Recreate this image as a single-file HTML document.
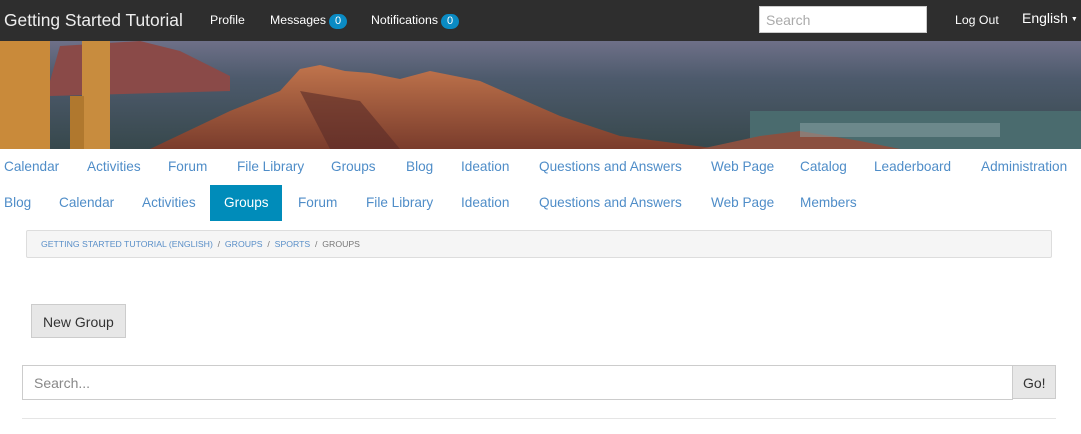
<!DOCTYPE html>
<html><head><meta charset="utf-8"><style>
*{margin:0;padding:0;box-sizing:border-box}
body{width:1081px;height:434px;background:#fff;font-family:"Liberation Sans",sans-serif;position:relative;overflow:hidden}
.top{position:absolute;left:0;top:0;width:1081px;height:41px;background:#2e2e2e;color:#fff}
.a{position:absolute;white-space:nowrap}
.badge{display:inline-block;background:#0a8bc4;color:#fff;border-radius:8px;font-size:11px;padding:1px 6px;margin-left:3px;line-height:13px}
.n{position:absolute;color:#4f8dc8;font-size:13.6px;white-space:nowrap}
</style></head><body>
<div class="top">
<div class="a" style="left:4px;top:10px;font-size:17.4px;color:#eee">Getting Started Tutorial</div>
<div class="a" style="left:210px;top:13px;font-size:12.3px">Profile</div>
<div class="a" style="left:270px;top:13px;font-size:12.3px">Messages<span class="badge">0</span></div>
<div class="a" style="left:371px;top:13px;font-size:12.3px">Notifications<span class="badge">0</span></div>
<div class="a" style="left:759px;top:6px;width:168px;height:27px;background:#fff;border:1px solid #ccc;color:#aaa;font-size:14px;padding:5px 6px">Search</div>
<div class="a" style="left:955px;top:13px;font-size:12.3px">Log Out</div>
<div class="a" style="left:1022px;top:10px;font-size:14px">English<span style="font-size:7px;vertical-align:middle;margin-left:3px">▼</span></div>
</div>
<svg style="position:absolute;left:0;top:41px" width="1081" height="108" viewBox="0 0 1081 108">
<defs>
<linearGradient id="sky" x1="0" y1="0" x2="0" y2="1"><stop offset="0" stop-color="#6e7088"/><stop offset=".35" stop-color="#4d5a6c"/><stop offset="1" stop-color="#37484c"/></linearGradient>
<linearGradient id="m" x1="0" y1="0" x2="0" y2="1"><stop offset="0" stop-color="#c0744c"/><stop offset="1" stop-color="#7a3c2c"/></linearGradient>
</defs>
<rect width="1081" height="108" fill="url(#sky)"/>
<rect y="70" x="750" width="331" height="38" fill="#4a6b6e"/>
<path d="M50 40 L60 5 L140 0 L180 10 L230 35 L230 50 L50 55Z" fill="#8a4a48"/>
<path d="M150 108 L230 70 L280 50 L300 28 L320 24 L345 30 L370 32 L400 38 L430 30 L480 40 L560 75 L620 95 L720 108Z" fill="url(#m)"/>
<path d="M700 108 L760 95 L800 90 L860 100 L900 108Z" fill="#8a5040"/>
<path d="M300 50 L330 108 L400 108 L360 60Z" fill="#5a2c28" opacity=".6"/>
<rect x="0" y="0" width="50" height="108" fill="#c98a3a"/>
<rect x="82" y="0" width="28" height="108" fill="#c88c3e"/>
<rect x="70" y="55" width="14" height="53" fill="#b0782e"/>
<rect x="800" y="82" width="200" height="14" fill="#8ea6a8" opacity=".5"/>
</svg>
<div class="n" style="left:4px;top:159px">Calendar</div>
<div class="n" style="left:87px;top:159px">Activities</div>
<div class="n" style="left:168px;top:159px">Forum</div>
<div class="n" style="left:237px;top:159px">File Library</div>
<div class="n" style="left:331px;top:159px">Groups</div>
<div class="n" style="left:406px;top:159px">Blog</div>
<div class="n" style="left:461px;top:159px">Ideation</div>
<div class="n" style="left:539px;top:159px">Questions and Answers</div>
<div class="n" style="left:711px;top:159px">Web Page</div>
<div class="n" style="left:800px;top:159px">Catalog</div>
<div class="n" style="left:874px;top:159px">Leaderboard</div>
<div class="n" style="left:981px;top:159px">Administration</div>
<div class="n" style="left:4px;top:195px">Blog</div>
<div class="n" style="left:59px;top:195px">Calendar</div>
<div class="n" style="left:142px;top:195px">Activities</div>
<div class="a" style="left:210px;top:185px;width:72px;height:36px;background:#008cba"></div>
<div class="n" style="left:224px;top:195px;color:#fff">Groups</div>
<div class="n" style="left:298px;top:195px">Forum</div>
<div class="n" style="left:366px;top:195px">File Library</div>
<div class="n" style="left:461px;top:195px">Ideation</div>
<div class="n" style="left:539px;top:195px">Questions and Answers</div>
<div class="n" style="left:711px;top:195px">Web Page</div>
<div class="n" style="left:800px;top:195px">Members</div>
<div class="a" style="left:26px;top:230px;width:1026px;height:28px;background:#f5f5f5;border:1px solid #ddd;border-radius:2px;font-size:8.7px;padding:8px 14px;color:#777">
<span style="color:#5a8fc8">GETTING STARTED TUTORIAL (ENGLISH)</span> &nbsp;/&nbsp; <span style="color:#5a8fc8">GROUPS</span> &nbsp;/&nbsp; <span style="color:#5a8fc8">SPORTS</span> &nbsp;/&nbsp; GROUPS</div>
<div class="a" style="left:31px;top:304px;width:95px;height:34px;background:#e7e7e7;border:1px solid #ccc;font-size:14px;color:#333;padding:9px 11px">New Group</div>
<div class="a" style="left:22px;top:365px;width:991px;height:35px;border:1px solid #ccc;font-size:14px;color:#888;padding:9px 11px">Search...</div>
<div class="a" style="left:1012px;top:365px;width:44px;height:34px;background:#e7e7e7;border:1px solid #ccc;font-size:14px;color:#333;padding:9px 10px">Go!</div>
<div class="a" style="left:22px;top:418px;width:1034px;height:1px;background:#e5e5e5"></div>
</body></html>
